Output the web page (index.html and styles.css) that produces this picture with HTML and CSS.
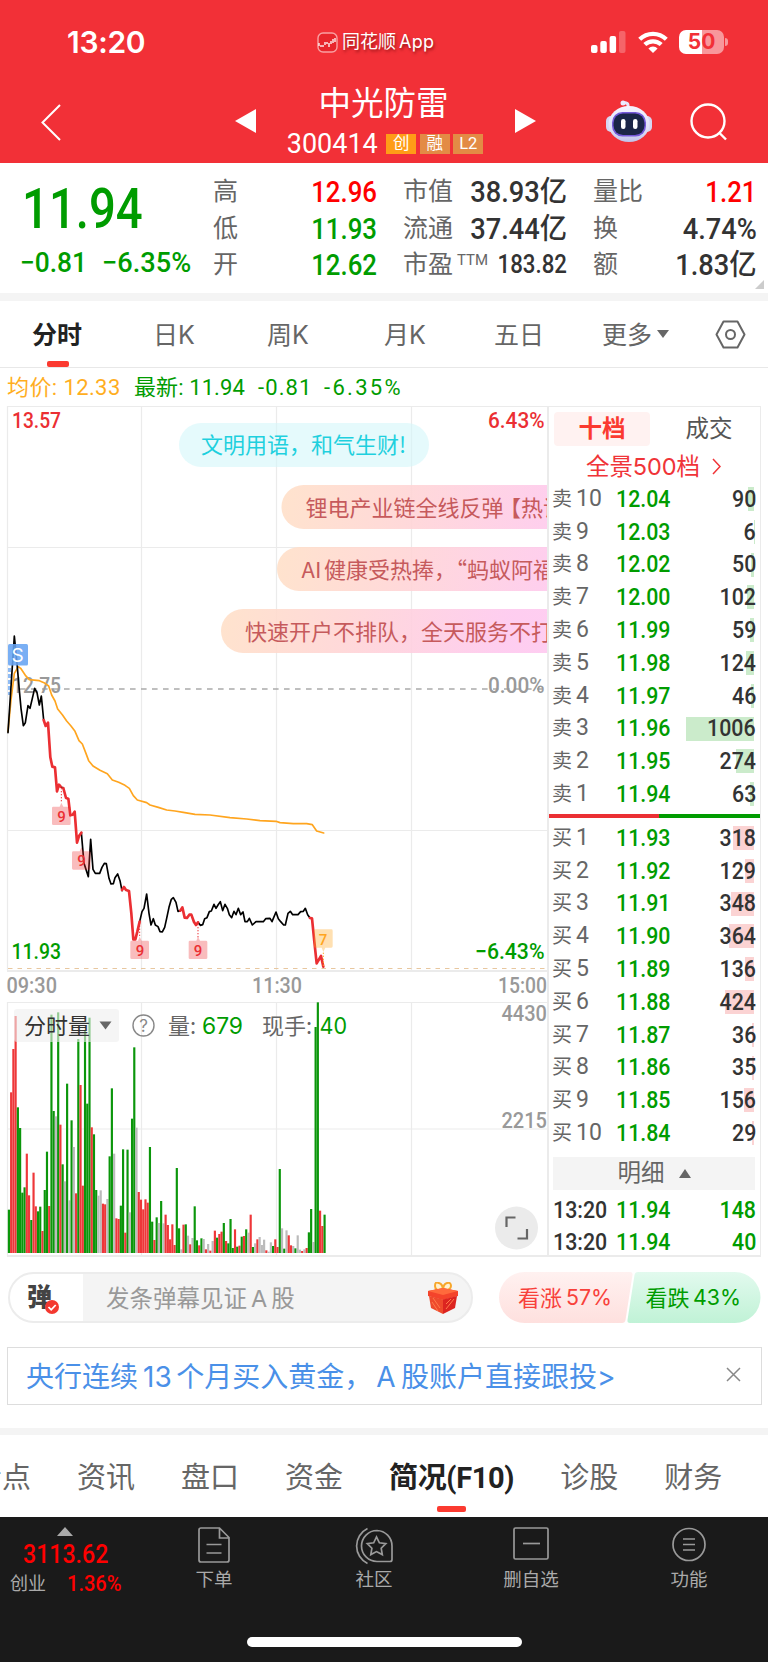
FILE: index.html
```html
<!DOCTYPE html>
<html lang="zh-CN">
<head>
<meta charset="utf-8">
<title>中光防雷 300414</title>
<link rel="stylesheet" href="styles.css">
</head>
<body>
<header class="top">
  <div class="status">
    <div class="clock">13:20</div>
    <div class="app">
      <svg width="21" height="21" viewBox="0 0 21 21"><rect x="1" y="1" width="19" height="19" rx="5" fill="#e8252c" stroke="#f9a0a2" stroke-width="1.400"/><path d="M2 11v3M4 13v2M6 13v2M8 10v3M10 10v2M12 11v4M14 9v3M16 7v4M18 6v4" fill="none" stroke="#fff" stroke-width="1.300"/></svg>
      <span>同花顺<em>App</em></span>
    </div>
    <div class="sys">
      <svg width="35" height="24" viewBox="0 0 35 24" fill="#fff"><rect x="0" y="15" width="6.500" height="8" rx="2"/><rect x="9.300" y="11" width="6.500" height="12" rx="2"/><rect x="18.600" y="6" width="6.500" height="17" rx="2"/><rect x="28" y="1" width="6.500" height="22" rx="2" opacity=".25"/></svg>
      <svg class="wifi" width="30" height="23" viewBox="0 0 30 23" fill="none" stroke="#fff" stroke-width="4.200"><path d="M1.700 8.300a19 19 0 0 1 26.600 0"/><path d="M6.800 13.600a11.800 11.800 0 0 1 16.400 0"/><path d="M15 22l-4.600-4.600a6.500 6.500 0 0 1 9.200 0z" fill="#fff" stroke="none"/></svg>
      <div class="battery">50</div><i class="nub"></i>
    </div>
  </div>
  <div class="titlebar">
    <svg class="back" width="20" height="37" viewBox="0 0 20 37" fill="none" stroke="#fff" stroke-width="2"><path d="M19 1L1.500 18.500 19 36"/></svg>
    <svg class="prev" width="21" height="24" viewBox="0 0 21 24"><path d="M21 0v24L0 12z" fill="#fff"/></svg>
    <div class="stock">
      <div class="name">中光防雷</div>
      <div class="code"><span class="num">300414</span><b class="tag cy">创</b><b class="tag">融</b><b class="tag">L2</b></div>
    </div>
    <svg class="next" width="21" height="24" viewBox="0 0 21 24"><path d="M0 0v24l21-12z" fill="#fff"/></svg>
    <svg class="robot" width="46" height="42" viewBox="0 0 46 42">
      <defs><linearGradient id="rb" x1="0" y1="0" x2="0" y2="1"><stop offset="0" stop-color="#f6f4ff"/><stop offset=".7" stop-color="#dcdcf5"/><stop offset="1" stop-color="#bfc2ea"/></linearGradient></defs>
      <path d="M22 8V5q0-2-4-2.500" fill="none" stroke="#e8e6fa" stroke-width="3"/><circle cx="17" cy="3" r="2.500" fill="#eceaff"/>
      <rect x="0" y="16" width="10" height="16" rx="5" fill="#d6d6f2"/><rect x="36" y="16" width="10" height="16" rx="5" fill="#d6d6f2"/>
      <ellipse cx="23" cy="24" rx="20.500" ry="18" fill="url(#rb)"/>
      <rect x="6" y="12" width="34" height="24.500" rx="10.500" fill="#7458d8"/><rect x="7.500" y="13.500" width="31" height="21.500" rx="9.500" fill="#1b2547"/>
      <rect x="15" y="19" width="4.500" height="10" rx="2.200" fill="#fff"/><rect x="27" y="19" width="4.500" height="10" rx="2.200" fill="#fff"/>
    </svg>
    <svg class="search" width="38" height="38" viewBox="0 0 38 38" fill="none" stroke="#fff" stroke-width="2.400"><circle cx="18" cy="18" r="16.500"/><path d="M29.500 30l6.500 6.500"/></svg>
  </div>
</header>

<section class="quote">
  <div class="last">
    <div class="price din">11.94</div>
    <div class="chg"><span class="din">−0.81</span><span class="din pct">−6.35%</span></div>
  </div>
  <dl class="c1"><div><dt>高</dt><dd class="up">12.96</dd></div><div><dt>低</dt><dd class="down">11.93</dd></div><div><dt>开</dt><dd class="down">12.62</dd></div></dl>
  <dl class="c2"><div><dt>市值</dt><dd class="wd">38.93亿</dd></div><div><dt>流通</dt><dd class="wd">37.44亿</dd></div><div><dt>市盈<sup>TTM</sup></dt><dd class="sm">183.82</dd></div></dl>
  <dl class="c3"><div><dt>量比</dt><dd class="up">1.21</dd></div><div><dt>换</dt><dd class="wd">4.74%</dd></div><div><dt>额</dt><dd class="wd">1.83亿</dd></div></dl>
  <i class="corner"></i>
</section>

<nav class="periods">
  <span class="t1 on">分时</span><span class="t2">日K</span><span class="t3">周K</span><span class="t4">月K</span><span class="t5">五日</span><span class="t6">更多</span><i class="caret"></i>
  <svg class="hex" width="31" height="29" viewBox="0 0 31 29" fill="none" stroke="#666" stroke-width="2"><path d="M8.500 1.500h14l7 13-7 13h-14l-7-13z" stroke-linejoin="round"/><circle cx="15.500" cy="14.500" r="4.500"/></svg>
</nav>

<div class="info"><span class="i1">均价: 12.33</span><span class="i2">最新: 11.94</span><span class="i3">-0.81</span><span class="i4">-6.35%</span></div>

<main class="board">
  <svg class="chart" width="549" height="851" viewBox="0 406 549 851">
    <defs>
      <linearGradient id="pill" gradientUnits="userSpaceOnUse" x1="0" y1="0" x2="350" y2="60"><stop offset="0" stop-color="#ffe0c8"/><stop offset=".35" stop-color="#ffd5d5"/><stop offset=".8" stop-color="#fec8ee"/><stop offset="1" stop-color="#fec8f0"/></linearGradient>
      <g id="nine"><path d="M-25 15h20L0 3l6 12h18q4 0 4 4v47q0 4-4 4h-48q-4 0-4-4V19q0-4 4-4z" fill="#eb2f33" opacity=".32"/></g>
    </defs>
    <g fill="none" stroke="#ebebeb" stroke-width="1.200"><path d="M7.500 970.500V406.500H548M7.500 547.500H548M7.500 830.500H548M141.500 406V970M276.500 406V970M411.500 406V970M7.500 1002.500H548M7.500 1129H548M7.500 1002V1256M141.500 1002V1256M276.500 1002V1256M411.500 1002V1256"/><path d="M7 971H548M7 1256H548" stroke-width="1.800"/></g>
    <path d="M20 689H548" stroke="#aaa" stroke-width="1.500" stroke-dasharray="5.600 5.400"/>
    <path d="M8 968.500H548" stroke="#e8c79f" stroke-width="1.200" stroke-dasharray="4.500 5"/>
    <path d="M9.500 668V695" stroke="#8fbcf5" stroke-width="3" stroke-dasharray="4 2"/>
    <g class="digits" font-size="22.500">
      <text x="12" y="693" textLength="49" fill="#999">12.75</text><text x="488" y="693" textLength="56.500" fill="#999">0.00%</text>
    </g>
    <g transform="translate(0 620) scale(.33333)" fill="none" stroke-linejoin="round" stroke-linecap="round">
      <path stroke="#ffa51f" stroke-width="5" d="M24 335L33 240 43 160 55 140 62 145 76 166 88 179 118 182 132 188 146 198 155 225 165 243 173 267 187 284 200 303 213 318 225 334 237 362 247 372 257 398 266 422 279 438 300 451 322 461 337 480 356 487 375 496 388 505 400 527 412 540 440 548 450 555 475 562 500 570 525 573 550 577 585 583 630 585 690 593 740 597 780 602 828 604 840 608 880 611 920 611 937 614 950 633 971 639"/>
      <path stroke="#000" stroke-width="5" d="M24 338L43 48 51 130 57 200 63 265 70 317 76 308 84 257 90 265 104 205 111 218 118 255 124 228 131 300M182 500L190 504M244 638L252 730 265 770 272 658 279 748 286 760 299 760 306 742 313 730 319 731 327 775 333 792 340 791 345 773 353 762 360 782 366 812M419 905L426 875 432 865 440 822 447 880 453 915 460 896 466 915 474 920 480 935 487 936 494 922 500 895 507 862 514 838 520 833 528 847 534 874 541 872M594 907L601 916 608 914 614 896 621 893 628 875 634 873 642 853 648 865 654 855 661 845 668 872 675 853 682 865 688 884 695 893 702 874 708 884 715 865 722 884 729 876 735 905 742 905 748 895 757 915 768 905 790 905 797 896 810 895 816 905 828 876 835 896 842 905 851 915 856 915 864 880 871 874 878 884 894 884 902 875 910 874 916 865 923 884 930 894"/>
      <path stroke="#eb2f33" stroke-width="8" d="M131 300L137 318 144 308 151 412 157 440 165 442 171 514 177 494 182 500M190 504L198 534 205 536 211 586 218 584 224 575 231 668 237 648 244 638M366 810L372 801 378 810 387 813 394 880 400 958 406 958 412 935 419 905M541 872L547 862 554 893 561 894 568 884 574 884 582 906 588 915 594 907M930 894L936 895 943 965 950 1030 963 1008 970 1040"/>
      <path stroke="#eb2f33" stroke-width="3" stroke-dasharray="4 5" stroke-linecap="butt" d="M184 504V548M419 908V952M594 912V952"/>
      <path stroke="#ffa51f" stroke-width="3" stroke-dasharray="4 5" stroke-linecap="butt" d="M970 998V1040"/>
      <use href="#nine" x="184" y="545"/><use href="#nine" x="244" y="679"/><use href="#nine" x="419" y="947"/><use href="#nine" x="594" y="947"/>
      <path d="M946 928h48q4 0 4 4v47q0 4-4 4h-18l-6 13-5-13h-19q-4 0-4-4v-47q0-4 4-4z" fill="#ffa51f" opacity=".35"/>
    </g>
    <g class="digits" font-size="15" text-anchor="middle" fill="#eb2f33"><text x="61.500" y="821.500">9</text><text x="81.500" y="865.500">9</text><text x="140" y="955.500">9</text><text x="198" y="955.500">9</text><text x="323" y="945" fill="#ffa51f">7</text></g>
    <rect x="8" y="644" width="20" height="21.500" rx="1.500" fill="#67a4f2" opacity=".88"/><text class="sans" x="17.500" y="662" font-size="19" text-anchor="middle" fill="#fff">S</text>

    <g class="digits" font-size="22.500">
      <g fill="#eb2f33"><text x="12" y="428" textLength="49">13.57</text><text x="488" y="428" textLength="56.500">6.43%</text></g>
      <g fill="#009c00"><text x="11.500" y="958.500" textLength="49.500">11.93</text><text x="475" y="958.500" textLength="69.500">−6.43%</text></g>
      <g fill="#999"><text x="6.500" y="993" textLength="50.500">09:30</text><text x="252" y="993" textLength="50">11:30</text><text x="498" y="993" textLength="49">15:00</text><text x="501.500" y="1020.500" textLength="45.500">4430</text><text x="501.500" y="1127.500" textLength="45.500">2215</text></g>
    </g>

    <g class="cjk" font-size="22">
      <rect x="179" y="423" width="250" height="44" rx="22" fill="#d4f6fa" opacity=".6"/><text x="201" y="453" fill="#1fd0de">文明用语，和气生财!</text>
      <g fill="#c65a5c">
        <g transform="translate(281.500 485)"><path d="M22 0H266.500V44H22A22 22 0 0 1 22 0z" fill="url(#pill)" opacity=".9"/><text x="24" y="30.500">锂电产业链全线反弹<tspan dx="-4.500">【</tspan>热议</text></g>
        <g transform="translate(277 547)"><path d="M22 0H271V44H22A22 22 0 0 1 22 0z" fill="url(#pill)" opacity=".9"/><text x="24.500" y="30.500">AI</text><text x="47" y="30.500">健康受热捧，“蚂蚁阿福</text></g>
        <g transform="translate(221 609)"><path d="M22 0H327V44H22A22 22 0 0 1 22 0z" fill="url(#pill)" opacity=".9"/><text x="24" y="30.500">快速开户不排队，全天服务不打</text></g>
      </g>
    </g>

    <g id="bars" transform="translate(0 980) scale(.33333)"></g>
    <rect x="14" y="1009" width="105" height="33" rx="3" fill="#eee" opacity=".6"/>
    <g class="cjk" font-size="22" fill="#333"><text x="24" y="1034">分时量</text><text x="168" y="1034" fill="#666">量:</text><text x="262" y="1034" fill="#666">现手:</text></g>
    <path d="M99.500 1021.500h12l-6 8z" fill="#666"/>
    <circle cx="143.500" cy="1025.500" r="10.500" fill="none" stroke="#888" stroke-width="1.400"/><text class="sans" x="143.500" y="1031.500" font-size="17" text-anchor="middle" fill="#888">?</text>
    <g class="sans" font-size="22.500" fill="#009c00"><text x="202" y="1033.500" textLength="41">679</text><text x="319.500" y="1033.500" textLength="27.500">40</text></g>
    <circle cx="516.500" cy="1228" r="21.500" fill="#ebebeb"/><path d="M506.500 1227v-9.500h9M527 1229v9.500h-9.500" fill="none" stroke="#666" stroke-width="2.200"/>
  </svg>

  <aside class="book">
    <div class="modes"><span class="on">十档</span><span>成交</span></div>
    <div class="pano">全景500档<svg width="9" height="17" viewBox="0 0 9 17" fill="none" stroke="#f03438" stroke-width="1.500"><path d="M1 1l7 7.500L1 16"/></svg></div>
    <div id="asks"></div>
    <div class="split"></div>
    <div id="bids"></div>
    <div class="detail">明细<i></i></div>
    <div class="tick"><span class="din">13:20</span><span class="din down">11.94</span><span class="din v down">148</span></div>
    <div class="tick"><span class="din">13:20</span><span class="din down">11.94</span><span class="din v down">40</span></div>
  </aside>
</main>

<section class="talk">
  <div class="input">
    <div class="dan">弹<svg width="14" height="14" viewBox="0 0 14 14"><circle cx="7" cy="7" r="7" fill="#f4382f"/><path d="M3.500 7l2.700 2.800L10.700 5" fill="none" stroke="#fff" stroke-width="1.800"/></svg></div>
    <span class="hint">发条弹幕见证<em>A</em>股</span>
    <svg class="gift" width="32" height="32" viewBox="0 0 32 32">
      <path d="M16 9Q8 9 8 4t4-3q4 1 4 8Q16 2 20 1q4-1 4 3t-8 5z" fill="#fff2d0" stroke="#f7a72b" stroke-width="2"/>
      <path d="M1 9l15-3 15 3v5l-15 4L1 14z" fill="#f4442b"/><path d="M2 14l14 3.500V32L4 26z" fill="#ee4a2c"/><path d="M30 14l-14 3.500V32l12-6z" fill="#dc2420"/>
      <path d="M1 9l15 4 15-4-15-3z" fill="#ff6a3c"/><path d="M6 16l7 10M5 20l6 9M19 27l8-10M19 22l5-5" stroke="#ff7a4a" stroke-width="1"/>
    </svg>
  </div>
  <div class="vote">
    <svg width="263" height="51" viewBox="0 0 263 51">
      <defs><linearGradient id="vr" x1="0" y1="0" x2="0" y2="1"><stop offset="0" stop-color="#fff1f0"/><stop offset="1" stop-color="#fee0de"/></linearGradient><linearGradient id="vg" x1="0" y1="0" x2="0" y2="1"><stop offset="0" stop-color="#e2faee"/><stop offset="1" stop-color="#c0f2d6"/></linearGradient></defs>
      <path d="M25.500 0H131q3 0 2.500 3l-7 45q-.5 3-3.500 3H25.500a25.500 25.500 0 0 1 0-51z" fill="url(#vr)"/>
      <path d="M139 0h97a25.500 25.500 0 0 1 0 51H131q-3 0-2.500-3l7-45q.5-3 3.500-3z" fill="url(#vg)"/>
      <g class="cjk" font-size="22"><g fill="#f8403a"><text x="19" y="33.500">看涨</text><text class="sans" x="67" y="33" textLength="46">57%</text></g><g fill="#009c00"><text x="146.500" y="33.500">看跌</text><text class="sans" x="194" y="33" textLength="48">43%</text></g></g>
    </svg>
  </div>
</section>

<section class="ad"><p>央行连续<em>13</em>个月买入黄金，<em class="a">A</em>股账户直接跟投&gt;</p>
  <svg width="15" height="15" viewBox="0 0 15 15" stroke="#888" stroke-width="1.500"><path d="M1 1l13 13M14 1L1 14"/></svg></section>

<nav class="sections"><span>看点</span><span>资讯</span><span>盘口</span><span>资金</span><span class="on">简况(F10)</span><span>诊股</span><span>财务</span></nav>

<footer class="dock">
  <div class="index"><i></i><div class="din pts">3113.62</div><div class="row"><span>创业</span><span class="din">1.36%</span></div></div>
  <div class="acts">
    <div class="a1"><svg width="32" height="36" viewBox="0 0 32 36"><path d="M3 1h18.500L31 10.500V33q0 2-2 2H3q-2 0-2-2V3q0-2 2-2zM21.500 1v10H31M8.500 17.500h15M8.500 26h15"/></svg>下单</div>
    <div class="a2"><svg width="38" height="38" viewBox="0 0 38 38"><path d="M12.500 1.500A19.500 19.500 0 0 0 12.500 36.500M22 3.500A15.500 15.500 0 1 0 22 34.500H35Q37 34.500 37 32.500V19A15.500 15.500 0 0 0 22 3.500zM21.500 10l2.900 5.800 6.400.9-4.600 4.500 1.100 6.400-5.800-3-5.700 3 1.100-6.400-4.600-4.500 6.400-.9z"/></svg>社区</div>
    <div class="a3"><svg width="36" height="34" viewBox="0 0 36 34"><rect x="1" y="1" width="34" height="31" rx="1.500"/><path d="M10 16.500h17"/></svg>删自选</div>
    <div class="a4"><svg width="34" height="36" viewBox="0 0 34 36"><circle cx="17" cy="17.500" r="16"/><path d="M11 12h12M11 17.500h12M11 23h12"/></svg>功能</div>
  </div>
  <div class="home"></div>
</footer>
<script src="app.js"></script>
</body>
</html>
```
FILE: styles.css
```css
* { box-sizing: border-box; }
body { margin: 0; width: 768px; height: 1663px; overflow: hidden; background: #fff; color: #333; font-family: Roboto, "Noto Sans CJK SC", sans-serif; }
i, em { font-style: normal; }
.din, dd { font-family: Roboto, "Noto Sans CJK SC", sans-serif; font-weight: 500; display: inline-block; transform: scaleX(.89); transform-origin: left center; white-space: nowrap; }
.up { color: #f00; }
.down { color: #009c00; }
.digits { font-family: Roboto, sans-serif; font-weight: 500; }
.cjk { font-family: "Noto Sans CJK SC", sans-serif; }
.sans { font-family: Inter, sans-serif; }

.top { height: 163px; background: #f23037; color: #fff; }
.status { height: 84px; display: flex; align-items: center; }
.clock { width: 250px; margin-left: 67px; font: 600 30px/84px Inter, sans-serif; letter-spacing: -.3px; }
.app { width: 274px; display: flex; align-items: center; gap: 4px; font: 18px/30px Inter, "Noto Sans CJK SC", sans-serif; text-shadow: 1px 2px 3px rgba(90,0,0,.6); }
.app em { margin-left: 3px; letter-spacing: .3px; }
.sys { display: flex; align-items: center; }
.wifi { margin-left: 12px; }
.battery { margin-left: 11px; width: 45px; height: 24px; border-radius: 7px; background: linear-gradient(90deg, #fff 51%, #f8979b 51%); color: #f23037; font: 700 21px/24px Inter, sans-serif; text-align: center; }
.nub { width: 3px; height: 8px; margin-left: 1px; border-radius: 0 3px 3px 0; background: #f8979b; }
.titlebar { display: flex; height: 79px; }
.back { margin: 20px 0 0 41px; }
.prev { margin: 25px 0 0 174px; }
.stock { width: 259px; display: flex; flex-direction: column; align-items: center; padding-right: 4px; }
.name { font-size: 32.500px; line-height: 40px; }
.code { display: flex; align-items: center; gap: 3.500px; height: 24px; margin: 8px 0 0 3px; }
.num { font-size: 27px; line-height: 24px; margin-right: 5px; }
.tag { width: 30px; height: 20px; background: #e38b45; font-weight: 400; font-size: 16.500px; line-height: 20px; text-align: center; }
.cy { background: #ff9c17; }
.next { margin-top: 25px; }
.robot { margin: 16px 0 0 70px; }
.search { margin: 19px 0 0 38px; }

.quote { height: 138px; border-bottom: 8px solid #f4f4f4; display: flex; padding-top: 11px; position: relative; }
.last { width: 213px; color: #009c00; }
.price { margin: 7px 0 0 22px; font-size: 55px; line-height: 56px; transform: scaleX(.86); display: block; }
.chg { display: flex; font-size: 28px; line-height: 32px; margin: 10px 0 0 20px; }
.chg .din { width: 82px; transform: scaleX(.94); }
.chg .pct { transform: scaleX(.97); }
dl { margin: 0; }
dl div { display: flex; justify-content: space-between; height: 36.500px; line-height: 36.500px; }
dt { font-size: 25px; color: #666; white-space: nowrap; }
dd { margin: 0; font-size: 29px; transform-origin: right center; }
dd.wd { transform: scaleX(.94); }
dd.sm { font-size: 25px; }
sup { font-size: 15px; line-height: 0; margin-left: 4px; vertical-align: 8px; }
.c1 { width: 164px; }
.c2 { width: 164px; margin-left: 26px; }
.c3 { width: 164px; margin-left: 26px; }
.corner { position: absolute; right: 4px; bottom: 4px; border: solid; border-width: 0 0 9px 9px; border-color: transparent transparent #ccc transparent; }

.periods { height: 67px; display: flex; align-items: center; font: 25px Inter, "Noto Sans CJK SC", sans-serif; color: #666; border-bottom: 1px solid #e8e8e8; }
.periods span { line-height: 66px; padding-top: 1px; height: 66px; position: relative; }
.periods .on { color: #222; font-weight: 700; }
.on::after { content: ""; position: absolute; }
.periods .on::after { left: 15px; bottom: 0; width: 22px; height: 6px; border-radius: 2px; background: #fb3a30; }
.t1 { margin-left: 32px; width: 121px; }
.t2 { width: 114px; }
.t3 { width: 117px; }
.t4 { width: 110px; }
.t5 { width: 108px; }
.t6 { width: 55px; }
.caret { border: solid; border-width: 8px 6px 0; border-color: #666 transparent transparent; margin-right: 46px; }

.info { height: 38px; display: flex; padding: 1px 0 0 7px; font-size: 22px; line-height: 38px; color: #009c00; white-space: nowrap; }
.i1 { width: 127px; color: #ffae1f; letter-spacing: .4px; }
.i2 { width: 124px; letter-spacing: .1px; }
.i3 { width: 66px; letter-spacing: 1.100px; }
.i4 { letter-spacing: 2.300px; }

.board { display: flex; height: 851px; }
.chart { display: block; flex: none; }
.book { width: 214px; flex: none; border: solid #ebebeb; border-width: 1px 1px 2px 2px; padding: 5px 2px 0 3px; margin-left: -2px; }
.modes { display: flex; height: 34px; gap: 11px; padding-left: 2px; font-size: 23.500px; line-height: 34px; text-align: center; color: #555; }
.modes span { width: 96px; position: relative; }
.modes .on { color: #fb3a30; font-weight: 700; background: #fff2f1; border-radius: 4px; }
.pano { height: 36.500px; padding: 5px 0 0 34px; display: flex; align-items: center; gap: 12px; font: 23.500px/32px Inter, "Noto Sans CJK SC", sans-serif; letter-spacing: -.1px; color: #f03438; }
.lv { display: flex; align-items: center; height: 32.800px; position: relative; font-size: 24px; line-height: 32px; }
.lv .s { width: 24px; font-size: 20px; color: #666; }
.lv .k { width: 40px; font-size: 23px; color: #666; }
.lv .p { color: #009c00; width: 60px; }
.v { margin: 0 2px 0 auto; transform-origin: right center; }
.bar { position: absolute; right: 4px; top: 4.500px; height: 24px; background: #cbebcb; }
.buy .bar { background: #fbd3d3; }
.lv .v { position: relative; z-index: 1; }
.split { height: 4px; margin: 3.500px -2px 3.500px -3px; background: linear-gradient(90deg, #eb2f33 52%, #009c00 52%); }
.detail { margin: 8px 3px 4px 1px; height: 33px; background: #f4f4f4; display: flex; align-items: center; justify-content: center; gap: 14px; font-size: 23.500px; line-height: 33px; color: #666; }
.detail i { border: solid; border-width: 0 6px 9px; border-color: transparent transparent #666; }
.tick { display: flex; height: 31.500px; line-height: 32px; font-size: 24px; padding-left: 1px; }
.tick span:first-child { width: 63px; }

.talk { display: flex; margin: 15px 0 0 8px; height: 51px; }
.input { width: 465px; height: 51px; border: 2px solid #ececec; border-radius: 26px; background: linear-gradient(90deg, #fff 73px, #f4f4f4 73px); display: flex; align-items: center; }
.dan { width: 42px; margin-left: 17px; position: relative; font-weight: 900; font-size: 25px; line-height: 46px; color: #444; }
.dan svg { position: absolute; left: 18px; top: 25px; }
.hint { margin: -2px 0 0 37px; font: 23.500px Inter, "Noto Sans CJK SC", sans-serif; color: #999; width: 321px; }
.hint em { margin: 0 4px; }
.vote { margin-left: 26px; }
.ad { margin: 23.500px 6px 0 7px; height: 58px; border: 1.500px solid #ddd; display: flex; align-items: center; justify-content: space-between; padding: 0 20px 2px 18px; }
.ad p { margin: 0; font: 28px Inter, "Noto Sans CJK SC", sans-serif; color: #4a90e8; white-space: nowrap; }
.ad em { margin: 0 4.500px 0 5px; }
.ad .a { margin: 0 5.500px 0 4px; }

.sections { margin-top: 23px; height: 89px; border-top: 7px solid #f4f4f4; display: flex; gap: 46px; font-size: 29px; line-height: 86px; color: #666; white-space: nowrap; }
.sections span { position: relative; }
.sections span:first-child { margin-left: -27px; }
.sections .on { color: #222; font-weight: 700; letter-spacing: -.35px; }
.sections .on::after { left: 48px; top: 71px; width: 29px; height: 6px; border-radius: 2px; background: #fb3a30; }

.dock { height: 145px; background: #1a1a1a; color: #aaa; display: grid; grid-template-columns: 131px 1fr; grid-template-rows: 120px 10px; }
.index { display: flex; flex-direction: column; }
.index i { margin: 10px 0 0 57px; width: 16px; border: solid; border-width: 0 8px 9px; border-color: transparent transparent #aaa; }
.pts { color: #f00; font-size: 26px; line-height: 30px; margin: 3px 0 0 23px; }
.row { display: flex; font-size: 18px; line-height: 28px; padding: 1px 0 0 10px; }
.row span:first-child { width: 57px; }
.row .din { color: #f00; font-size: 22px; transform: scaleX(.91); }
.acts { display: flex; }
.acts div { display: flex; flex-direction: column; align-items: center; justify-content: space-between; font-size: 18.500px; line-height: 26px; height: 76px; padding-top: 10px; width: 100px; }
.acts svg { fill: none; stroke: #999; stroke-width: 1.700; }
.a1 { margin-left: 33px; }
.a2 { margin-left: 60px; }
.a3 { margin-left: 57px; }
.a4 { margin-left: 58px; }
.home { grid-column: 1 / 3; width: 275px; height: 10px; border-radius: 5px; background: #fff; margin-left: 247px; }
```
FILE: app.js
```js
// Chart labels are condensed to a fixed width.
document.querySelectorAll('text[textLength]').forEach(t => t.setAttribute('lengthAdjust', 'spacingAndGlyphs'));

// Minute volume: colour code (g fall, r rise, n flat) and bar top in chart units.
const volume = 'g689 r337 r207 r108 g382 g444 g638 g622 r521 r646 g720 r578 r679 g694 g680 r753 g630 g515 r678 g104 g393 n409 g97 r434 g553 n604 g311 n661 g421 n501 r640 g177 r315 r617 g150 g371 g113 r442 g463 g630 n647 n631 r671 r673 n657 g529 g325 n521 r715 r717 g677 g508 r758 g509 n697 g416 g202 n443 r636 r659 r688 r658 r668 g501 g725 r780 g712 n729 g663 n730 r704 r735 r778 r733 r795 g564 g745 n808 r734 g733 n767 r793 n774 g679 g781 r796 g775 n777 r808 n792 r812 n783 r752 g773 r762 r755 g729 r783 g790 g717 g804 r748 g800 r797 g770 r768 g748 n758 r704 g801 n790 r778 n771 n795 n779 r811 n815 n787 g798 r778 r801 g567 n745 g806 n751 r766 r796 n798 g805 n766 n809 r813 n808 r804 g757 g687 n786 g141 g67 r692 r738 g704'.split(' ');
const tint = { g: '#0b960b', r: '#ee3739', n: '#bbb' };
document.getElementById('bars').innerHTML = volume.map((b, i) => {
  const top = +b.slice(1);
  return `<rect x="${(23.5 + 6.716 * i).toFixed(1)}" y="${top}" width="6.500" height="${819 - top}" fill="${tint[b[0]]}"/>`;
}).join('');

const level = (side, k, p, v) =>
  `<div class="lv ${side === '买' ? 'buy' : ''}"><span class="s">${side}</span><span class="k">${k}</span><span class="p din">${p}</span><i class="bar" style="width:${(v / 1006 * 68).toFixed(1)}px"></i><span class="v din">${v}</span></div>`;
const asks = [['12.04', 90], ['12.03', 6], ['12.02', 50], ['12.00', 102], ['11.99', 59], ['11.98', 124], ['11.97', 46], ['11.96', 1006], ['11.95', 274], ['11.94', 63]];
const bids = [['11.93', 318], ['11.92', 129], ['11.91', 348], ['11.90', 364], ['11.89', 136], ['11.88', 424], ['11.87', 36], ['11.86', 35], ['11.85', 156], ['11.84', 29]];
document.getElementById('asks').innerHTML = asks.map(([p, v], i) => level('卖', 10 - i, p, v)).join('');
document.getElementById('bids').innerHTML = bids.map(([p, v], i) => level('买', i + 1, p, v)).join('');
```
